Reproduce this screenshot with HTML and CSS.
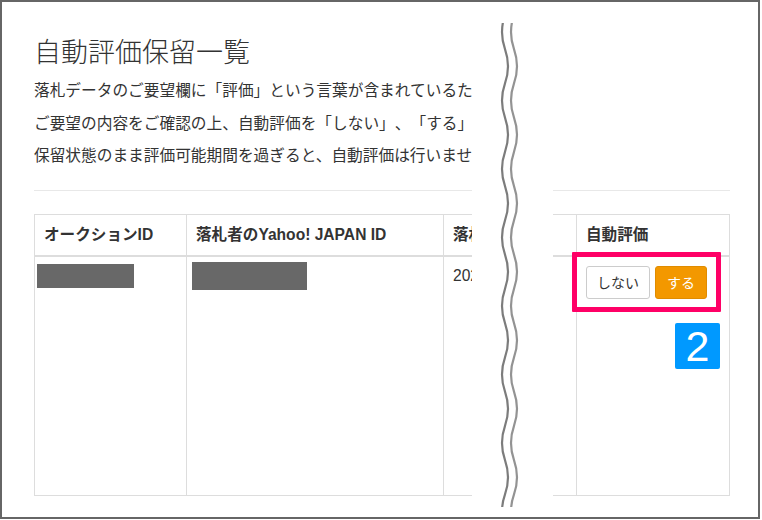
FILE: index.html
```html
<!DOCTYPE html>
<html lang="ja">
<head>
<meta charset="utf-8">
<title>自動評価保留一覧</title>
<link rel="stylesheet" href="styles.css">
</head>
<body>
<div class="frame">
  <h1 class="title">自動評価保留一覧</h1>
  <div class="notes">
    <p class="note">落札データのご要望欄に「評価」という言葉が含まれているた</p>
    <p class="note">ご要望の内容をご確認の上、自動評価を「しない」、「する」</p>
    <p class="note">保留状態のまま評価可能期間を過ぎると、自動評価は行いませ</p>
  </div>
  <hr class="rule">
  <table class="list">
    <colgroup>
      <col class="c1"><col class="c2"><col class="c3"><col class="c4">
    </colgroup>
    <thead>
      <tr>
        <th>オークションID</th>
        <th>落札者のYahoo! JAPAN ID</th>
        <th>落札日時</th>
        <th>自動評価</th>
      </tr>
    </thead>
    <tbody>
      <tr>
        <td><span class="mask mask-a"></span></td>
        <td><span class="mask mask-b"></span></td>
        <td>2021/01/01</td>
        <td>
          <div class="actions">
            <span class="btn btn-no">しない</span>
            <span class="btn btn-yes">する</span>
          </div>
        </td>
      </tr>
    </tbody>
  </table>

  <svg class="cut" width="81" height="520" viewBox="0 0 81 520" aria-hidden="true">
    <defs>
      <clipPath id="cutclip"><rect x="0" y="23" width="81" height="484"/></clipPath>
    </defs>
    <rect x="0" y="20" width="81" height="490" fill="#fff"/>
    <g clip-path="url(#cutclip)" fill="none" stroke-width="2.2">
      <path stroke="#7c7c7c" d="M33 14.85 Q27 31.98 33 49.1 T33 83.35 T33 117.6 T33 151.85 T33 186.1 T33 220.35 T33 254.6 T33 288.85 T33 323.1 T33 357.35 T33 391.6 T33 425.85 T33 460.1 T33 494.35 T33 528.6"/>
      <path stroke="#939393" transform="translate(9 0)" d="M33 14.85 Q27 31.98 33 49.1 T33 83.35 T33 117.6 T33 151.85 T33 186.1 T33 220.35 T33 254.6 T33 288.85 T33 323.1 T33 357.35 T33 391.6 T33 425.85 T33 460.1 T33 494.35 T33 528.6"/>
    </g>
  </svg>

  <div class="highlight"></div>
  <div class="badge">2</div>
</div>
</body>
</html>
```

FILE: styles.css
```css
* {
  box-sizing: border-box;
}

body {
  margin: 0;
  background: #fff;
  font-family: "Liberation Sans", "Noto Sans CJK JP", sans-serif;
  color: #333;
  text-spacing-trim: space-all;
}

.frame {
  position: relative;
  width: 760px;
  height: 519px;
  border: 2px solid #666;
  padding: 33px 28px 0 32px;
  overflow: hidden;
}

.title {
  margin: 0;
  font-family: "Noto Sans CJK JP", sans-serif;
  font-size: 27px;
  font-weight: 300;
  line-height: 32px;
  color: #333;
}

.notes {
  margin-top: 7px;
}

.note {
  margin: 0;
  font-family: "Noto Sans CJK JP", sans-serif;
  font-size: 15.7px;
  line-height: 32.5px;
  white-space: nowrap;
  color: #333;
  text-spacing-trim: space-all;
}

.rule {
  margin: 18.6px 0 0;
  border: 0;
  border-top: 1px solid #e8e8e8;
  height: 0;
}

.list {
  margin-top: 23px;
  width: 696px;
  table-layout: fixed;
  border-collapse: separate;
  border-spacing: 0;
  border-top: 1px solid #ddd;
  border-left: 1px solid #ddd;
  font-size: 15.6px;
  color: #333;
}

.c1 { width: 152px; }
.c2 { width: 257px; }
.c3 { width: 133px; }
.c4 { width: 153px; }

.list th {
  text-align: left;
  font-weight: bold;
  padding: 0 9px;
  line-height: 40px;
  white-space: nowrap;
  overflow: hidden;
  border-right: 1px solid #ddd;
  border-bottom: 2px solid #ddd;
}

.list td {
  vertical-align: top;
  padding: 8px 9px;
  height: 239px;
  line-height: 22px;
  white-space: nowrap;
  overflow: hidden;
  border-right: 1px solid #ddd;
  border-bottom: 1px solid #ddd;
}

.mask {
  display: block;
  background: #686868;
}

.mask-a {
  width: 97px;
  height: 24px;
  margin: -1px 0 0 -7px;
}

.mask-b {
  width: 115px;
  height: 28px;
  margin: -3px 0 0 -4px;
}

.actions {
  display: flex;
  gap: 5px;
  margin-top: 1px;
}

.btn {
  display: block;
  height: 33px;
  border: 1px solid;
  border-radius: 3px;
  font-family: "Noto Sans CJK JP", sans-serif;
  font-size: 14px;
  line-height: 31px;
  text-align: center;
}

.btn-no {
  width: 64px;
  background: #fff;
  border-color: #ccc;
  color: #333;
}

.btn-yes {
  width: 52px;
  background: #f39800;
  border-color: #e08c00;
  color: #fff;
}

.cut {
  position: absolute;
  left: 470px;
  top: -2px;
}

.highlight {
  position: absolute;
  left: 570px;
  top: 250px;
  width: 149px;
  height: 60px;
  border: 5px solid #ff0066;
  border-radius: 1px;
}

.badge {
  position: absolute;
  left: 673px;
  top: 321px;
  width: 45px;
  height: 46px;
  border-radius: 2px;
  background: #0099ff;
  color: #fff;
  font-family: "Liberation Sans", sans-serif;
  font-weight: normal;
  font-size: 43px;
  line-height: 47px;
  text-align: center;
}
```
